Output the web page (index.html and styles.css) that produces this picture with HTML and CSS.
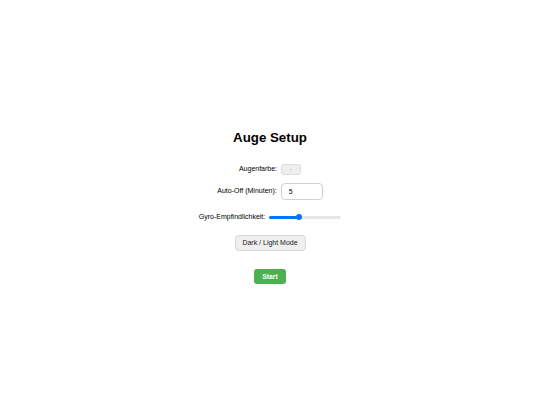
FILE: index.html
```html
<!DOCTYPE html>
<html lang="de">
<head>
  <meta charset="UTF-8">
  <meta name="viewport" content="width=device-width, initial-scale=1.0">
  <title>Auge Setup</title>
  <link rel="stylesheet" href="styles.css">
</head>
<body>
  <div class="setup">
    <h1>Auge Setup</h1>

    <div class="row row-color">
      <label for="eyeColor">Augenfarbe:</label>
      <button id="eyeColor" class="color-pick">-</button>
    </div>

    <div class="row row-off">
      <label for="autoOff">Auto-Off (Minuten):</label>
      <input type="text" id="autoOff" class="num" value="5">
    </div>

    <div class="row row-gyro">
      <label for="gyro">Gyro-Empfindlichkeit:</label>
      <input type="range" id="gyro" class="slider" min="0" max="10" value="4">
    </div>

    <button class="mode-btn">Dark / Light Mode</button>

    <button class="start-btn">Start</button>
  </div>
</body>
</html>
```

FILE: styles.css
```css
body {
  font-family: 'Liberation Sans', Arial, Helvetica, sans-serif;
  margin: 0;
  padding: 0;
  background: #ffffff;
  color: #000;
  display: flex;
  justify-content: center;
  align-items: center;
  min-height: 100vh;
}
.setup {
  display: flex;
  flex-direction: column;
  align-items: center;
  margin-top: 8px;
}
h1 {
  font-size: 13.3px;
  line-height: 16px;
  font-weight: bold;
  margin: 0 0 18px 0;
}
.row {
  display: flex;
  align-items: center;
  justify-content: center;
  gap: 4px;
  font-size: 7px;
}
.row label {
  line-height: 8px;
}
.row-off {
  margin-top: 8px;
}
.row-gyro {
  margin-top: 13px;
}
.color-pick {
  width: 20px;
  height: 11px;
  padding: 0;
  border: 1px solid #dcdcdc;
  border-radius: 3px;
  background: #efefef;
  color: #777;
  font-family: inherit;
  font-size: 6px;
  line-height: 9px;
}
.num {
  width: 42px;
  height: 17px;
  box-sizing: border-box;
  padding: 0 0 0 7px;
  border: 1px solid #d0d0d0;
  border-radius: 4px;
  font-family: inherit;
  font-size: 7px;
  color: #000;
  outline: none;
}
.slider {
  -webkit-appearance: none;
  appearance: none;
  width: 72px;
  height: 3px;
  margin: 3px 0 3px 0;
  border-radius: 2px;
  background: linear-gradient(to right, #0075ff 0%, #0075ff 40%, #e6e6e6 40%, #e6e6e6 100%);
  outline: none;
}
.slider::-webkit-slider-thumb {
  -webkit-appearance: none;
  appearance: none;
  width: 6px;
  height: 6px;
  border-radius: 50%;
  background: #0075ff;
  border: none;
}
.mode-btn {
  margin-top: 13px;
  width: 71px;
  height: 16px;
  padding: 0;
  border: 1px solid #d6d6d6;
  border-radius: 4px;
  background: #efefef;
  color: #222;
  font-family: inherit;
  font-size: 7px;
}
.start-btn {
  margin-top: 18px;
  width: 32px;
  height: 15px;
  padding: 0;
  border: none;
  border-radius: 3px;
  background: #4caf50;
  color: #ffffff;
  font-family: inherit;
  font-size: 6.8px;
  font-weight: bold;
}
```
